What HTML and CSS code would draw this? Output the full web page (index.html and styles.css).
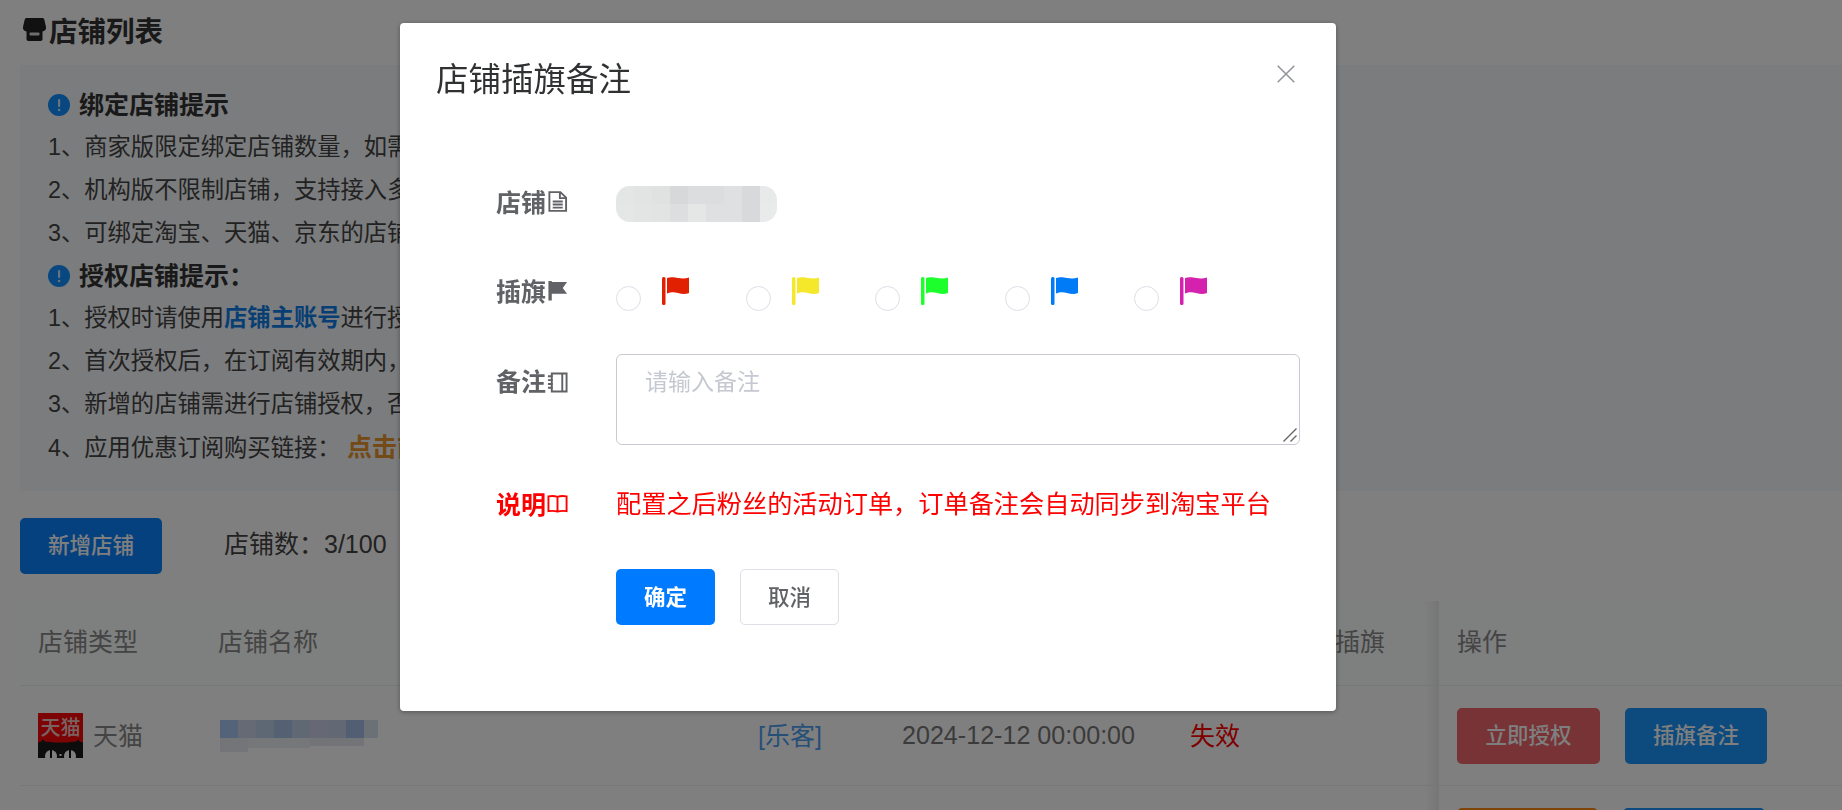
FILE: index.html
```html
<!DOCTYPE html>
<html lang="zh-CN">
<head>
<meta charset="utf-8">
<title>店铺列表</title>
<link rel="stylesheet" href="styles.css">
</head>
<body>
<main class="page">
  <h1 class="page-title">
    <svg class="shop-icon" viewBox="0 0 23 23"><path d="M4 0H19C20.5 0 21 .6 21.4 2L23 9C23.4 11.5 22 13 19.5 13.5V21C19.5 22.3 18.8 23 17.5 23H5.5C4.2 23 3.5 22.3 3.5 21V13.5C1 13 -.4 11.5 0 9L1.6 2C2 .6 2.5 0 4 0Z"/><rect class="shop-slot" x="6.5" y="14.5" width="10" height="3" rx="1"/></svg>
    <span>店铺列表</span>
  </h1>

  <section class="notice">
    <h2 class="notice-head"><svg class="info-icon" viewBox="0 0 22 22"><circle cx="11" cy="11" r="11"/><rect class="info-mark" x="10" y="5" width="2.2" height="8" rx="1"/><circle class="info-mark" cx="11.1" cy="16" r="1.3"/></svg>绑定店铺提示</h2>
    <p>1、商家版限定绑定店铺数量，如需</p>
    <p>2、机构版不限制店铺，支持接入多</p>
    <p>3、可绑定淘宝、天猫、京东的店铺</p>
    <h2 class="notice-head"><svg class="info-icon" viewBox="0 0 22 22"><circle cx="11" cy="11" r="11"/><rect class="info-mark" x="10" y="5" width="2.2" height="8" rx="1"/><circle class="info-mark" cx="11.1" cy="16" r="1.3"/></svg>授权店铺提示：</h2>
    <p>1、授权时请使用<b class="link">店铺主账号</b>进行授</p>
    <p>2、首次授权后，在订阅有效期内，</p>
    <p>3、新增的店铺需进行店铺授权，否</p>
    <p>4、应用优惠订阅购买链接： <b class="buy">点击前</b></p>
  </section>

  <div class="toolbar">
    <button class="btn btn-add">新增店铺</button>
    <span class="count">店铺数：3/100</span>
  </div>

  <table class="shops">
    <colgroup>
      <col class="c-type"><col class="c-name"><col class="c-src"><col class="c-time"><col class="c-state"><col class="c-flag"><col class="c-op">
    </colgroup>
    <thead>
      <tr><th>店铺类型</th><th>店铺名称</th><th></th><th></th><th></th><th>插旗</th><th class="op">操作</th></tr>
    </thead>
    <tbody>
      <tr>
        <td>
          <div class="shop-type">
            <svg class="tmall" viewBox="0 0 45 45">
              <rect width="45" height="45" fill="#f80808"/>
              <text class="tmall-text" x="22.5" y="21.5" text-anchor="middle">天猫</text>
              <path d="M0 30C8 29 12 29 15 30H30C33 29 37 29 45 30V45H0Z" fill="#1a1a1a" stroke="#1a1a1a"/>
              <path d="M0 30H45L41 28V26L36 30H9L4 26V28Z" fill="#1a1a1a"/>
              <ellipse cx="13" cy="43" rx="6" ry="6" fill="#fff"/><ellipse cx="32" cy="43" rx="6" ry="6" fill="#fff"/>
              <rect x="12" y="37" width="2" height="8" fill="#111"/><rect x="31" y="37" width="2" height="8" fill="#111"/>
              <rect x="21.5" y="41" width="2" height="2" fill="#fff"/>
            </svg>
            <span class="shop-type-name">天猫</span>
          </div>
        </td>
        <td>
          <svg class="name-blur" viewBox="0 0 158 32">
            <rect y="0" width="18" height="18" fill="#a5c7f5"/><rect x="18" width="18" height="18" fill="#cbd5ea"/><rect x="36" width="18" height="18" fill="#bccfe9"/><rect x="54" width="18" height="18" fill="#a9c3e6"/><rect x="72" width="18" height="18" fill="#c0d0e8"/><rect x="90" width="18" height="18" fill="#ccd3ea"/><rect x="108" width="18" height="18" fill="#c4d2e8"/><rect x="126" width="18" height="18" fill="#a4bde6"/><rect x="144" width="14" height="18" fill="#d8e3ee"/>
            <rect y="18" width="28" height="14" fill="#e6ebf1"/><rect x="28" y="18" width="62" height="10" fill="#eceff3"/><rect x="90" y="18" width="54" height="8" fill="#e6e9ef"/>
          </svg>
        </td>
        <td class="src">[乐客]</td>
        <td class="time">2024-12-12 00:00:00</td>
        <td class="state">失效</td>
        <td></td>
        <td class="op"><div class="actions"><button class="btn btn-auth">立即授权</button><button class="btn btn-flag">插旗备注</button></div></td>
      </tr>
      <tr>
        <td></td><td></td><td></td><td></td><td></td><td></td>
        <td class="op"><div class="actions"><button class="btn btn-warn"></button><button class="btn btn-flag"></button></div></td>
      </tr>
    </tbody>
  </table>
</main>

<div class="overlay"></div>

<div class="modal" role="dialog">
  <header class="modal-head">
    <h3>店铺插旗备注</h3>
    <svg class="close" viewBox="0 0 18 18"><path d="M.7.7 17.3 17.3M17.3.7.7 17.3"/></svg>
  </header>
  <form class="form">
    <div class="row row-shop">
      <label class="label">店铺<svg class="label-icon" viewBox="0 0 22 22"><path class="ln" d="M2.5 1.2H14L20 7V20.8H2.5ZM13.5 1.5V7.5H20M6 11H16.5M6 14.2H16.5M6 17.4H16.5"/></svg></label>
      <svg class="shop-blur" viewBox="0 0 161 36">
        <defs><clipPath id="blurclip"><rect width="161" height="36" rx="14"/></clipPath></defs>
        <g clip-path="url(#blurclip)">
          <rect width="18" height="18" fill="#e4e5e5"/><rect x="18" width="18" height="18" fill="#e2e3e3"/><rect x="36" width="18" height="18" fill="#e0e1e1"/><rect x="54" width="18" height="18" fill="#d7d8da"/><rect x="72" width="18" height="18" fill="#dcdddf"/><rect x="90" width="18" height="18" fill="#dcdddf"/><rect x="108" width="18" height="18" fill="#dfe0e2"/><rect x="126" width="18" height="18" fill="#d8d9db"/><rect x="144" width="17" height="18" fill="#e8e9e9"/>
          <rect y="18" width="18" height="18" fill="#e5e6e6"/><rect x="18" y="18" width="18" height="18" fill="#e3e4e4"/><rect x="36" y="18" width="18" height="18" fill="#e2e3e3"/><rect x="54" y="18" width="18" height="18" fill="#dddee0"/><rect x="72" y="18" width="18" height="18" fill="#e5e6e6"/><rect x="90" y="18" width="18" height="18" fill="#dfe0e2"/><rect x="108" y="18" width="18" height="18" fill="#dfe0e2"/><rect x="126" y="18" width="18" height="18" fill="#d8d9db"/><rect x="144" y="18" width="17" height="18" fill="#e9eaea"/>
        </g>
      </svg>
    </div>

    <div class="row row-flags">
      <label class="label">插旗<svg class="label-icon" viewBox="0 0 22 22"><path class="solid" d="M1.5 1H5V21.5H1.5ZM5 2H21L16.5 8.5L21 14.5H5Z"/></svg></label>
      <div class="flags">
        <label class="flag-opt"><input type="radio" name="flag" class="radio"><svg class="flag flag-red" viewBox="0 0 27 28"><rect width="3.5" height="28" rx="1.5"/><path d="M5 1C9-.5 13 .5 16 1S23 2 27 .5V16C23 17.5 20 17 16 16S9 15 5 16.5Z"/></svg></label>
        <label class="flag-opt"><input type="radio" name="flag" class="radio"><svg class="flag flag-yellow" viewBox="0 0 27 28"><rect width="3.5" height="28" rx="1.5"/><path d="M5 1C9-.5 13 .5 16 1S23 2 27 .5V16C23 17.5 20 17 16 16S9 15 5 16.5Z"/></svg></label>
        <label class="flag-opt"><input type="radio" name="flag" class="radio"><svg class="flag flag-green" viewBox="0 0 27 28"><rect width="3.5" height="28" rx="1.5"/><path d="M5 1C9-.5 13 .5 16 1S23 2 27 .5V16C23 17.5 20 17 16 16S9 15 5 16.5Z"/></svg></label>
        <label class="flag-opt"><input type="radio" name="flag" class="radio"><svg class="flag flag-blue" viewBox="0 0 27 28"><rect width="3.5" height="28" rx="1.5"/><path d="M5 1C9-.5 13 .5 16 1S23 2 27 .5V16C23 17.5 20 17 16 16S9 15 5 16.5Z"/></svg></label>
        <label class="flag-opt"><input type="radio" name="flag" class="radio"><svg class="flag flag-pink" viewBox="0 0 27 28"><rect width="3.5" height="28" rx="1.5"/><path d="M5 1C9-.5 13 .5 16 1S23 2 27 .5V16C23 17.5 20 17 16 16S9 15 5 16.5Z"/></svg></label>
      </div>
    </div>

    <div class="row row-note">
      <label class="label">备注<svg class="label-icon" viewBox="0 0 22 22"><path class="ln" d="M5 1.5H20.5V20.5H5ZM16 1.5V20.5"/><path class="ln" d="M1 4.5H6M1 8.5H6M1 12.5H6M1 16.5H6"/></svg></label>
      <div class="note-wrap">
        <textarea class="note" placeholder="请输入备注"></textarea>
        <svg class="grip" viewBox="0 0 14 14"><path d="M.5 13.5 13.5.5M7.5 13.5 13.5 7.5"/></svg>
      </div>
    </div>

    <div class="row row-desc">
      <label class="label label-red">说明<svg class="label-icon" viewBox="0 0 22 22"><path class="ln" d="M11 4C8 3 5 3 1.5 3.5V19C5 18.5 8 18.5 11 19.5C14 18.5 17 18.5 20.5 19V3.5C17 3 14 3 11 4ZM11 4V19.5"/></svg></label>
      <p class="desc">配置之后粉丝的活动订单，订单备注会自动同步到淘宝平台</p>
    </div>

    <div class="row row-actions">
      <button type="button" class="btn btn-ok">确定</button>
      <button type="button" class="btn btn-cancel">取消</button>
    </div>
  </form>
</div>
</body>
</html>
```

FILE: styles.css
```css
* { box-sizing: border-box; }
html, body { margin: 0; height: 100%; overflow: hidden; background: #fff; }
body { font-family: "Liberation Sans", "Noto Sans CJK SC", sans-serif; color: #333; }
p, h1, h2, h3 { margin: 0; }

.page { width: 1842px; height: 810px; overflow: hidden; padding-left: 20px; }
.page-title { height: 58px; margin: 0 0 7px; display: flex; align-items: center; gap: 3px; padding-left: 3px; font-size: 28.5px; font-weight: 700; color: #333; }
.shop-icon { width: 23px; height: 23px; fill: #222; }
.shop-slot { fill: #ddd; }

.notice { background: #f6f8fb; padding: 18.6px 0 21.6px 28px; font-size: 23.3px; line-height: 42.75px; color: #444; }
.notice-head { display: flex; align-items: center; font-size: 25px; font-weight: 700; color: #333; line-height: 42.75px; }
.info-icon { width: 22px; height: 22px; margin-right: 9px; fill: #108fff; flex: none; }
.info-mark { fill: #fff; opacity: .8; }
.link { color: #0f7fe8; }
.buy { color: #e8942f; font-size: 25px; }

.toolbar { display: flex; align-items: center; gap: 62px; margin: 27px 0; height: 56px; }
.count { font-size: 25px; color: #444; margin-bottom: 7px; }

.btn { height: 56px; width: 142px; border: 0; border-radius: 5px; font: 500 21.5px "Liberation Sans", "Noto Sans CJK SC", sans-serif; color: #fff; padding: 0 0 4px; }
.btn-add { background: #0a82ff; }
.btn-auth { background: #ee666c; width: 143px; }
.btn-flag { background: #1a95fb; }
.btn-warn { background: #ff8a10; width: 141px; }

.shops { width: 1822px; table-layout: fixed; border-collapse: collapse; font-size: 25px; color: #888; }
.c-type { width: 180px; } .c-name { width: 540px; } .c-src { width: 144px; } .c-time { width: 288px; } .c-state { width: 145px; } .c-flag { width: 122px; } .c-op { width: 403px; }
.shops th { height: 85px; font-weight: 400; text-align: left; padding: 0 18px 6px; background: #fdfeff; border-bottom: 1px solid #ebeef5; }
.shops td { height: 100px; padding: 0 18px; border-bottom: 1px solid #ebeef5; }
.op { position: relative; }
.op::before { content: ""; position: absolute; left: -14px; top: 0; bottom: 0; width: 14px; background: linear-gradient(to left, rgba(0, 0, 0, .07), transparent); }
.shop-type { display: flex; align-items: center; gap: 10px; color: #888; }
.shop-type-name { margin-bottom: 3px; }
.tmall { width: 45px; height: 45px; flex: none; }
.tmall-text { font-size: 20px; fill: #f6c4c4; font-weight: 500; }
.name-blur { display: block; width: 158px; height: 32px; margin-left: 2px; }
.shops .src { color: #4d9ff0; padding-bottom: 3px; }
.shops .time { font-size: 25.1px; color: #777; }
.shops .state { color: #f00; padding-bottom: 3px; }
.actions { display: flex; gap: 25px; }

.overlay { position: fixed; inset: 0; background: rgba(0, 0, 0, .5); }

.modal { position: fixed; left: 400px; top: 23px; width: 936px; height: 688px; background: #fff; border-radius: 4px; box-shadow: 0 1px 5px rgba(0, 0, 0, .35); padding: 0 36px 0 97px; }
.modal-head { height: 76px; display: flex; align-items: flex-end; justify-content: space-between; margin-left: -61px; }
.modal-head h3 { font-size: 32.5px; font-weight: 400; color: #303133; line-height: 38px; }
.close { width: 18px; height: 18px; margin: 0 5px 16px 0; fill: none; stroke: #909399; stroke-width: 1.5; }

.form { padding-top: 87px; display: flex; flex-direction: column; }
.row { display: flex; align-items: flex-start; }
.label { width: 119px; flex: none; display: flex; align-items: center; gap: 1px; height: 36px; font-size: 25px; font-weight: 700; color: #606266; margin-left: -1px; margin-right: 1px; }
.label-icon { width: 21px; height: 21px; flex: none; }
.ln { fill: none; stroke: currentColor; stroke-width: 2; }
.solid { fill: currentColor; }
.label-red { color: #f00; }

.row-shop .label { margin-top: -3px; }
.shop-blur { width: 161px; height: 36px; display: block; }

.row-flags { margin-top: 52px; height: 37px; }
.row-flags .label { margin-top: -2px; }
.flags { display: flex; }
.flag-opt { width: 129.6px; display: flex; align-items: flex-start; }
.radio { appearance: none; -webkit-appearance: none; width: 25px; height: 25px; margin: 12px 21px 0 0; border: 1.5px solid #dcdfe6; border-radius: 50%; background: #fff; flex: none; }
.flag { width: 27px; height: 28px; margin-top: 3px; flex: none; }
.flag-red { fill: #e02000; }
.flag-yellow { fill: #f5e82a; }
.flag-green { fill: #1cff2c; }
.flag-blue { fill: #007bf7; }
.flag-pink { fill: #d422ae; }

.row-note { margin-top: 43px; }
.row-note .label { margin-top: 8px; }
.row-note .label-icon { margin-top: 4px; }
.note-wrap { position: relative; width: 684px; height: 91px; }
.note { width: 100%; height: 100%; border: 1.5px solid #c8c9d2; border-radius: 6px; padding: 11px 28px; font: 23px/32px "Liberation Sans", "Noto Sans CJK SC", sans-serif; color: #606266; outline: 0; display: block; resize: none; }
.note::placeholder { color: #c5c8d0; opacity: 1; }
.grip { position: absolute; right: 3px; bottom: 3px; width: 14px; height: 14px; fill: none; stroke: #666; stroke-width: 1.4; pointer-events: none; }

.row-desc { margin-top: 41px; }
.row-desc .label { margin-top: -1px; }
.desc { font-size: 25.2px; line-height: 36px; color: #f00; }

.row-actions { margin: 47px 0 0 119px; gap: 25px; }
.btn-ok { width: 99px; background: #007bff; font-weight: 700; }
.btn-cancel { width: 99px; background: #fff; border: 1.5px solid #dcdfe6; color: #606266; padding-bottom: 4px; }
```
